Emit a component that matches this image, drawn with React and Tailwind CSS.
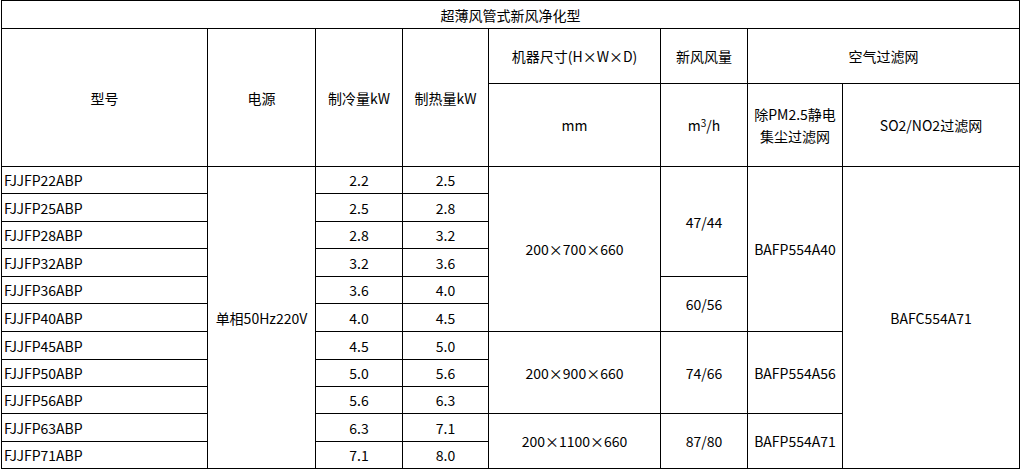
import React from "react";

const models = [
  ["FJJFP22ABP", "2.2", "2.5"],
  ["FJJFP25ABP", "2.5", "2.8"],
  ["FJJFP28ABP", "2.8", "3.2"],
  ["FJJFP32ABP", "3.2", "3.6"],
  ["FJJFP36ABP", "3.6", "4.0"],
  ["FJJFP40ABP", "4.0", "4.5"],
  ["FJJFP45ABP", "4.5", "5.0"],
  ["FJJFP50ABP", "5.0", "5.6"],
  ["FJJFP56ABP", "5.6", "6.3"],
  ["FJJFP63ABP", "6.3", "7.1"],
  ["FJJFP71ABP", "7.1", "8.0"],
];

const heights = ["h-[27px]", "h-[28px]", "h-[27px]", "h-[28px]", "h-[27px]", "h-[28px]", "h-[28px]", "h-[27px]", "h-[27px]", "h-[28px]", "h-[27px]"];

const td = "border border-black p-0 text-center align-middle";

export default function App() {
  return (
    <div className="bg-white w-[1021px] h-[471px] pl-px" style={{ fontFamily: '"Noto Sans CJK SC", "Noto Sans", sans-serif' }}>
      <table className="table-fixed border-collapse text-[14px] leading-[20px] text-black w-[1018px]">
        <colgroup>
          <col className="w-[206px]" />
          <col className="w-[108px]" />
          <col className="w-[87px]" />
          <col className="w-[86px]" />
          <col className="w-[172px]" />
          <col className="w-[87px]" />
          <col className="w-[95px]" />
          <col className="w-[177px]" />
        </colgroup>
        <tbody>
          <tr className="h-[28px]">
            <td colSpan={8} className={td}>超薄风管式新风净化型</td>
          </tr>
          <tr className="h-[55px]">
            <td rowSpan={2} className={td}>型号</td>
            <td rowSpan={2} className={td}>电源</td>
            <td rowSpan={2} className={td}>制冷量kW</td>
            <td rowSpan={2} className={td}>制热量kW</td>
            <td className={td}>机器尺寸(H×W×D)</td>
            <td className={td}>新风风量</td>
            <td colSpan={2} className={td}>空气过滤网</td>
          </tr>
          <tr className="h-[83px]">
            <td className={td}>mm</td>
            <td className={td}>
              m<span className="text-[10px] align-[4px] leading-none">3</span>/h
            </td>
            <td className={`${td} leading-[22px]`}>
              除PM2.5静电
              <br />
              集尘过滤网
            </td>
            <td className={td}>SO2/NO2过滤网</td>
          </tr>
          {models.map((m, i) => (
            <tr key={m[0]} className={heights[i]}>
              <td className="border border-black p-0 pl-[2px] text-left align-middle">{m[0]}</td>
              {i === 0 && (
                <td rowSpan={11} className={td}>单相50Hz220V</td>
              )}
              <td className={td}>{m[1]}</td>
              <td className={td}>{m[2]}</td>
              {i === 0 && <td rowSpan={6} className={td}>200×700×660</td>}
              {i === 6 && <td rowSpan={3} className={td}>200×900×660</td>}
              {i === 9 && <td rowSpan={2} className={td}>200×1100×660</td>}
              {i === 0 && <td rowSpan={4} className={td}>47/44</td>}
              {i === 4 && <td rowSpan={2} className={td}>60/56</td>}
              {i === 6 && <td rowSpan={3} className={td}>74/66</td>}
              {i === 9 && <td rowSpan={2} className={td}>87/80</td>}
              {i === 0 && <td rowSpan={6} className={td}>BAFP554A40</td>}
              {i === 6 && <td rowSpan={3} className={td}>BAFP554A56</td>}
              {i === 9 && <td rowSpan={2} className={td}>BAFP554A71</td>}
              {i === 0 && <td rowSpan={11} className={td}>BAFC554A71</td>}
            </tr>
          ))}
        </tbody>
      </table>
    </div>
  );
}
